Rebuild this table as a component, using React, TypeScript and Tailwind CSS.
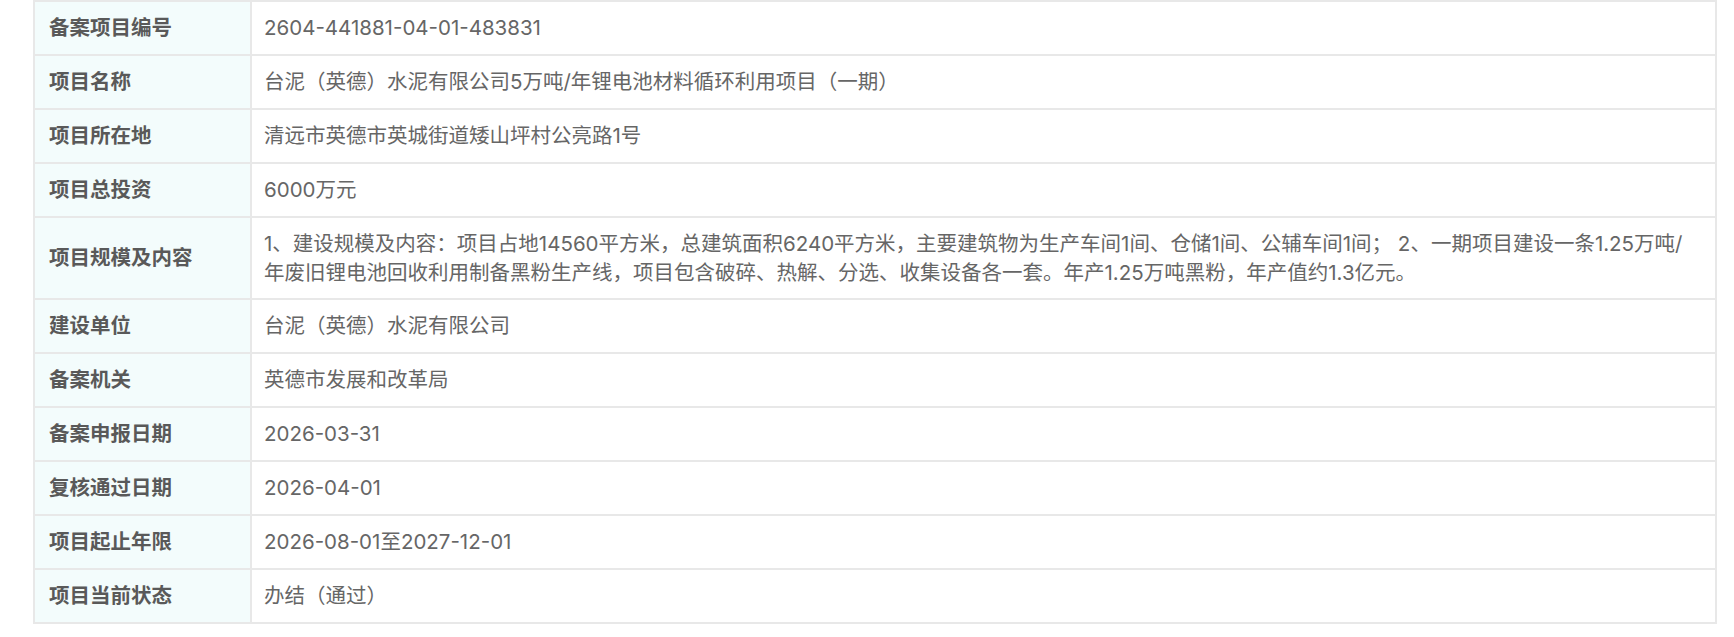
import React from "react";

const rows: { label: string; value: React.ReactNode; tall?: boolean }[] = [
  { label: "备案项目编号", value: "2604-441881-04-01-483831" },
  { label: "项目名称", value: "台泥（英德）水泥有限公司5万吨/年锂电池材料循环利用项目（一期）" },
  { label: "项目所在地", value: "清远市英德市英城街道矮山坪村公亮路1号" },
  { label: "项目总投资", value: "6000万元" },
  {
    label: "项目规模及内容",
    tall: true,
    value: (
      <>
        1、建设规模及内容：项目占地14560平方米，总建筑面积6240平方米，主要建筑物为生产车间1间、仓储1间、公辅车间1间； 2、一期项目建设一条1.25万吨/
        <br />
        年废旧锂电池回收利用制备黑粉生产线，项目包含破碎、热解、分选、收集设备各一套。年产1.25万吨黑粉，年产值约1.3亿元。
      </>
    ),
  },
  { label: "建设单位", value: "台泥（英德）水泥有限公司" },
  { label: "备案机关", value: "英德市发展和改革局" },
  { label: "备案申报日期", value: "2026-03-31" },
  { label: "复核通过日期", value: "2026-04-01" },
  { label: "项目起止年限", value: "2026-08-01至2027-12-01" },
  { label: "项目当前状态", value: "办结（通过）" },
];

export default function App() {
  return (
    <div
      className="w-[1734px] h-[637px] bg-white"
      style={{ fontFamily: 'Inter, "Noto Sans CJK SC", sans-serif' }}
    >
      <div className="ml-[33px] w-[1684px] border-2 border-[#e8e8e8] border-b-0">
        {rows.map((r) => (
          <div key={r.label} className="flex border-b-2 border-[#e8e8e8]">
            <div className="w-[217px] shrink-0 bg-[#f3fcfc] border-r-2 border-[#e8e8e8] flex items-center pl-[14px] text-[20.5px] font-bold text-[#595959]">
              {r.label}
            </div>
            <div
              className={
                r.tall
                  ? "flex-1 pl-[12px] pr-[14px] py-[11px] text-[20.5px] leading-[29px] text-[#666666] whitespace-nowrap"
                  : "flex-1 pl-[12px] pr-[14px] py-[11px] text-[20.5px] leading-[30px] text-[#666666]"
              }
            >
              {r.value}
            </div>
          </div>
        ))}
      </div>
    </div>
  );
}
